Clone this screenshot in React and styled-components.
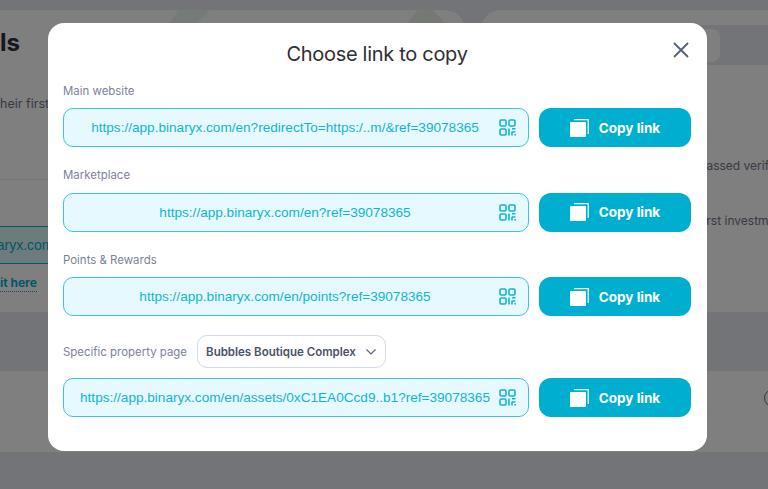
import React from "react";
import styled, { createGlobalStyle } from "styled-components";

const GlobalStyle = createGlobalStyle`
  html, body { margin: 0; padding: 0; }
  body { font-family: "Inter", "Liberation Sans", sans-serif; }
`;

const Page = styled.div`
  position: relative;
  width: 768px;
  height: 489px;
  overflow: hidden;
  background: #e6e8f0;
  padding-top: 10px;
  box-sizing: border-box;
`;

const TopRow = styled.div`
  display: grid;
  grid-template-columns: 465px 1fr;
  gap: 16px;
  height: 302px;
`;

const LeftCard = styled.section`
  position: relative;
  background: #fff;
  border-radius: 0 20px 0 0;
  overflow: hidden;
`;

const RightCard = styled.section`
  position: relative;
  background: #fff;
  border-radius: 20px 0 0 0;
  overflow: hidden;
`;

const CardTitle = styled.h2`
  margin: 18px 0 0 0;
  font-size: 24px;
  line-height: 30px;
  font-weight: 700;
  color: #2c3040;
  height: 30px;
`;

const Blurb = styled.p`
  margin: 36px 0 0 -4px;
  font-size: 12.5px;
  line-height: 20px;
  color: #6f7487;
  white-space: nowrap;
`;

const Divider = styled.div`
  margin-top: 65px;
  height: 1px;
  background: #e6e8f0;
`;

const RefBox = styled.div`
  margin: 46px 0 0 -40px;
  height: 36px;
  width: 300px;
  border: 1px solid #00aecf;
  background: #dcf6fa;
  display: flex;
  align-items: center;
  font-size: 14px;
  color: #00aecf;
  font-family: "Liberation Sans", sans-serif;
  padding-left: 17px;
`;

const HereLink = styled.a`
  display: block;
  margin: 11px 0 0 0;
  width: max-content;
  font-size: 12px;
  line-height: 16px;
  font-weight: 700;
  color: #00aecf;
  border-bottom: 1px dotted #00aecf;
`;

const Deco = styled.svg`
  position: absolute;
  top: 0;
  left: 0;
`;

const CardHead = styled.div`
  height: 15px;
`;

const FilterBand = styled.div`
  height: 40px;
  background: #e6e8f0;
  display: flex;
  align-items: center;
`;

const FilterPill = styled.div`
  width: 239px;
  height: 33px;
  background: #fff;
  border-radius: 8px;
`;

const Checks = styled.div`
  display: flex;
  flex-direction: column;
  gap: 40px;
  padding: 93px 0 0 218px;
`;

const CheckText = styled.span`
  font-size: 12px;
  line-height: 15px;
  color: #6f7487;
  white-space: nowrap;
`;

const BottomCard = styled.section`
  margin-top: 59px;
  height: 81px;
  box-sizing: border-box;
  padding-top: 18px;
  background: #fff;
  display: flex;
  align-items: flex-start;
  justify-content: flex-end;
`;

const Ring = styled.div`
  width: 16px;
  height: 16px;
  flex: none;
  margin: 0 -14px 0 0;
  border: 1px solid #6f7487;
  border-radius: 50%;
`;

const Backdrop = styled.div`
  position: absolute;
  inset: 0;
  background: rgba(0, 0, 0, 0.5);
`;

const Modal = styled.div`
  position: absolute;
  left: 48px;
  top: 23px;
  width: 659px;
  height: 428px;
  box-sizing: border-box;
  padding: 16.5px 16px 0 15px;
  background: #fff;
  border-radius: 16px;
`;

const Title = styled.h1`
  margin: 0 0 14px;
  font-size: 20px;
  line-height: 28px;
  font-weight: 400;
  letter-spacing: -0.3px;
  text-align: center;
  color: #2c2f36;
`;

const CloseButton = styled.button`
  position: absolute;
  top: 17px;
  right: 16px;
  width: 20px;
  height: 20px;
  padding: 0;
  border: 0;
  background: none;
  color: #56607c;
  display: flex;
`;

const Field = styled.div`
  margin-bottom: 19px;
`;

const Label = styled.div`
  font-size: 11.45px;
  line-height: 18px;
  margin-bottom: 8.5px;
  color: #7c8299;
`;

const PickerRow = styled.div`
  display: flex;
  align-items: center;
  gap: 10px;
  height: 33px;
  margin-bottom: 10px;
`;

const PickerLabel = styled(Label)`
  margin-bottom: 0;
  white-space: nowrap;
`;

const Picker = styled.button`
  width: 189px;
  height: 33px;
  flex: none;
  box-sizing: border-box;
  padding: 0 8px 0 8px;
  display: flex;
  align-items: center;
  justify-content: space-between;
  border: 1px solid #d5d9e8;
  border-radius: 10px;
  background: #fff;
  font-family: inherit;
  font-size: 11.5px;
  font-weight: 600;
  color: #4a5068;
  white-space: nowrap;
`;

const LinkRow = styled.div`
  display: flex;
  gap: 10px;
`;

const LinkBox = styled.div`
  width: 466px;
  height: 39px;
  box-sizing: border-box;
  display: flex;
  align-items: center;
  padding-right: 12px;
  border: 1.5px solid #3cc3df;
  border-radius: 10px;
  background: #e6f9fe;
  color: #12b4d4;
`;

const LinkText = styled.span`
  flex: 1;
  min-width: 0;
  padding-left: 7px;
  text-align: center;
  font-family: "Liberation Sans", Arial, sans-serif;
  font-size: 13.6px;
  white-space: nowrap;
`;

const CopyButton = styled.button`
  width: 152px;
  height: 39px;
  display: flex;
  align-items: center;
  justify-content: center;
  gap: 10px;
  border: 0;
  border-radius: 12px;
  background: #00aecf;
  color: #fff;
  font-family: inherit;
  font-size: 13.5px;
  font-weight: 700;
`;

const QrIcon = () => (
  <svg width="17" height="17" viewBox="0 0 17 17" fill="none" stroke="currentColor" strokeWidth="1.6">
    <rect x="1" y="1" width="6" height="6" rx="1.2" />
    <rect x="10" y="1" width="6" height="6" rx="1.2" />
    <rect x="1" y="10" width="6" height="6" rx="1.2" />
    <path d="M10 9.5v7M12.6 13h3.8M13 9.8h3.4M16.2 15v1.6M13 13v3.4" />
  </svg>
);

const CopyIcon = () => (
  <svg width="19" height="18" viewBox="0 0 19 18">
    <path d="M4 .6h14.2V15" fill="none" stroke="#fff" strokeWidth="1.2" />
    <rect x="0" y="3" width="16" height="15" rx="1" fill="#fff" />
  </svg>
);

const Chevron = () => (
  <svg width="12" height="8" viewBox="0 0 12 8" fill="none" stroke="#5c6379" strokeWidth="1.2">
    <path d="M1.5 1.5 6 6l4.5-4.5" />
  </svg>
);

const links = [
  { label: "Main website", url: "https://app.binaryx.com/en?redirectTo=https:/..m/&ref=39078365" },
  { label: "Marketplace", url: "https://app.binaryx.com/en?ref=39078365" },
  { label: "Points & Rewards", url: "https://app.binaryx.com/en/points?ref=39078365" },
];

const LinkLine = ({ url }) => (
  <LinkRow>
    <LinkBox>
      <LinkText>{url}</LinkText>
      <QrIcon />
    </LinkBox>
    <CopyButton>
      <CopyIcon />
      Copy link
    </CopyButton>
  </LinkRow>
);

export default function App() {
  return (
    <Page>
      <GlobalStyle />
      <TopRow>
        <LeftCard>
          <Deco width="465" height="14" viewBox="0 0 465 14">
            <path d="M178 0h32l-13 13h-27z" fill="#e8f6f2" />
            <path d="M418 0h14q10 8 13 13h-38q6-8 11-13z" fill="#eaf3e6" />
          </Deco>
          <CardTitle>ls</CardTitle>
          <Blurb>their first</Blurb>
          <Divider />
          <RefBox>binaryx.com</RefBox>
          <HereLink>it here</HereLink>
        </LeftCard>
        <RightCard>
          <CardHead />
          <FilterBand>
            <FilterPill />
          </FilterBand>
          <Checks>
            <CheckText>passed verification</CheckText>
            <CheckText>first investment</CheckText>
          </Checks>
        </RightCard>
      </TopRow>
      <BottomCard>
        <Ring />
      </BottomCard>
      <Backdrop />
      <Modal>
        <Title>Choose link to copy</Title>
        <CloseButton aria-label="Close">
          <svg width="20" height="20" viewBox="0 0 20 20" fill="none" stroke="currentColor" strokeWidth="1.8">
            <path d="M3 3l14 14M17 3 3 17" />
          </svg>
        </CloseButton>
        {links.map((link) => (
          <Field key={link.label}>
            <Label>{link.label}</Label>
            <LinkLine url={link.url} />
          </Field>
        ))}
        <PickerRow>
          <PickerLabel>Specific property page</PickerLabel>
          <Picker>
            Bubbles Boutique Complex
            <Chevron />
          </Picker>
        </PickerRow>
        <LinkLine url="https://app.binaryx.com/en/assets/0xC1EA0Ccd9..b1?ref=39078365" />
      </Modal>
    </Page>
  );
}
